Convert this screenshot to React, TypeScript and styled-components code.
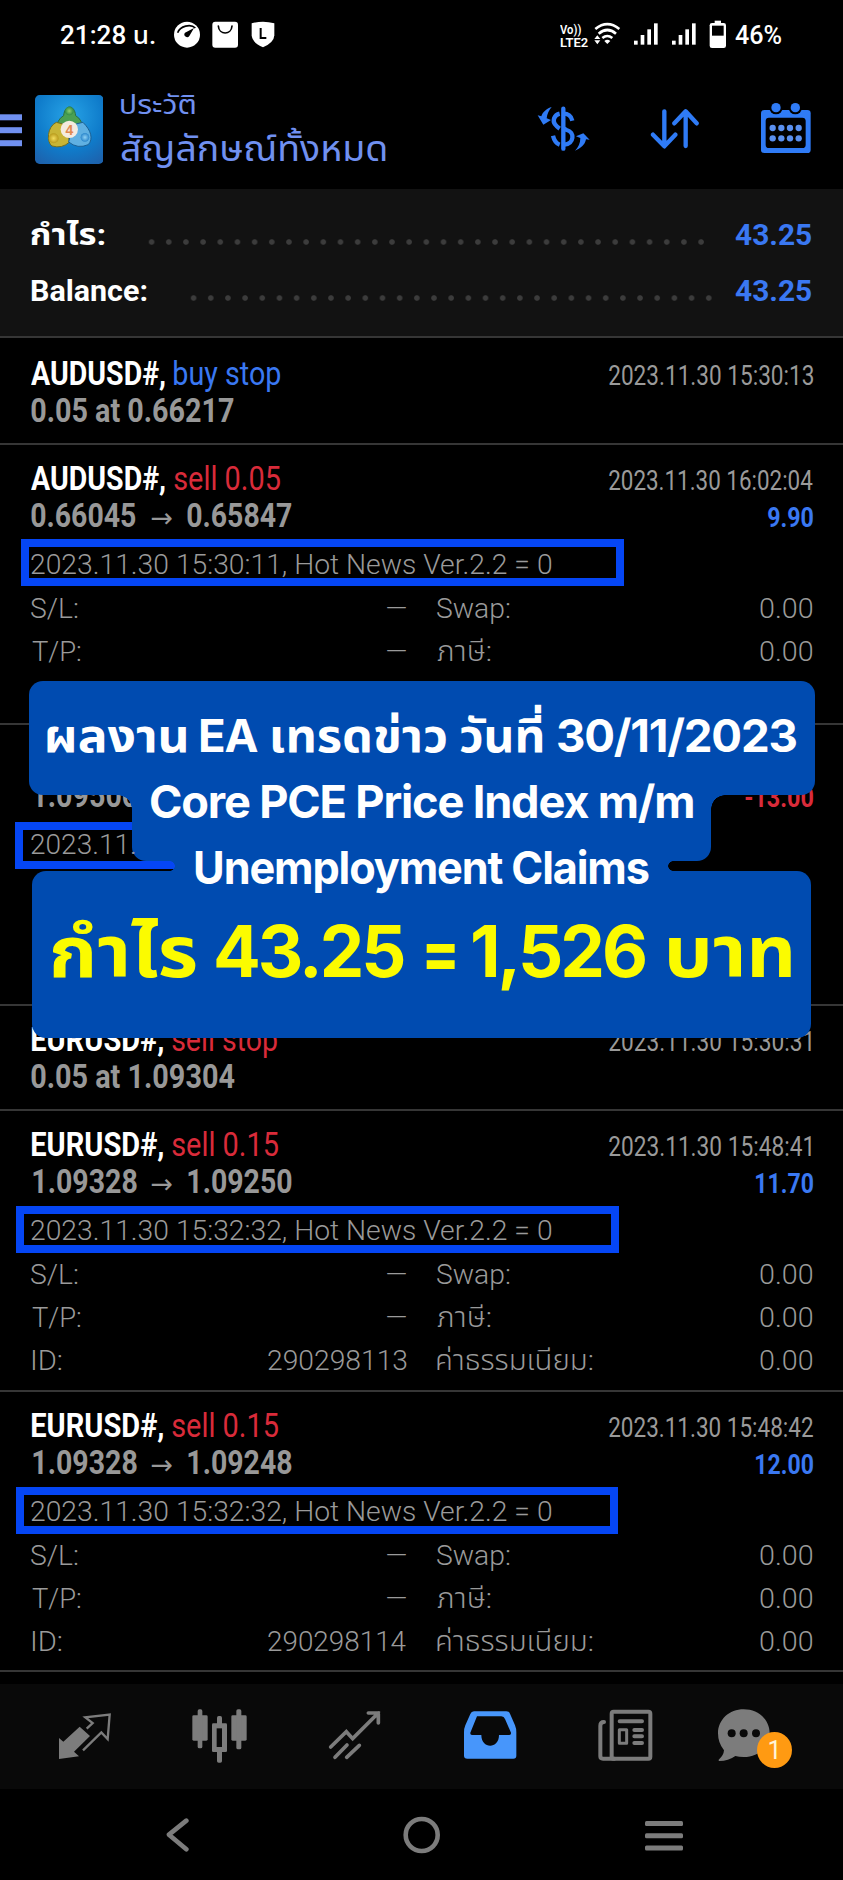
import React, { useLayoutEffect, useRef, useState } from 'react';
import styled, { createGlobalStyle } from 'styled-components';

const ROBOTO = 'Roboto, "Noto Sans Thai", "Noto Sans", sans-serif';
const INTER = 'Inter, "Noto Sans Thai", "Noto Sans", sans-serif';

const C = {
  blue: '#3a78f2',
  icon: '#2f7bf6',
  head: '#7090f0',
  red: '#d92b3a',
  grey: '#989898',
  dim: '#9a9a9a',
  line: '#363636',
  frame: '#0546f5',
  banner: '#004bb0',
  nav: '#7c7c7c',
};

const Global = createGlobalStyle`
  html, body { margin: 0; background: #000; }
  *, *::before, *::after { box-sizing: border-box; }
`;

/* ---------- text set to a given ink width ---------- */

const FitBox = styled.span<{ $w: number; $ml: number }>`
  display: block;
  flex: none;
  width: ${(p) => p.$w}px;
  margin-left: ${(p) => p.$ml}px;
  white-space: nowrap;
`;

const FitInk = styled.span<{ $size: number; $weight: number; $color: string; $family: string; $track: number }>`
  display: inline-block;
  transform-origin: 0 50%;
  font-family: ${(p) => p.$family};
  font-size: ${(p) => p.$size}px;
  font-weight: ${(p) => p.$weight};
  letter-spacing: ${(p) => p.$track}px;
  color: ${(p) => p.$color};
`;

type FitProps = {
  children: string;
  w: number;
  box?: number;
  size?: number;
  weight?: number;
  color?: string;
  family?: string;
  ml?: number;
  track?: number;
};

function Fit({
  children,
  w,
  box,
  size = 28,
  weight = 330,
  color = C.dim,
  family = ROBOTO,
  ml = 0,
  track = 0,
}: FitProps) {
  const ref = useRef<HTMLSpanElement>(null);
  const [t, setT] = useState('none');
  useLayoutEffect(() => {
    const ctx = document.createElement('canvas').getContext('2d');
    if (!ctx) return;
    ctx.font = `${weight} ${size}px ${family}`;
    ctx.letterSpacing = `${track}px`;
    const m = ctx.measureText(children);
    const ink = m.actualBoundingBoxRight + m.actualBoundingBoxLeft;
    if (ink <= 0) return;
    const s = w / ink;
    setT(`translateX(${(m.actualBoundingBoxLeft * s).toFixed(2)}px) scaleX(${s.toFixed(4)})`);
  }, [children, w, size, weight, family, track]);
  return (
    <FitBox $w={box ?? w} $ml={ml}>
      <FitInk
        ref={ref}
        $size={size}
        $weight={weight}
        $color={color}
        $family={family}
        $track={track}
        style={{ transform: t }}
      >
        {children}
      </FitInk>
    </FitBox>
  );
}

/* ---------- page ---------- */

const Screen = styled.main`
  position: relative;
  display: flex;
  flex-direction: column;
  width: 843px;
  height: 1880px;
  overflow: hidden;
  background: #000;
  font-family: ${ROBOTO};
`;

const Glyph = styled.svg<{ $ml?: number; $mt?: number }>`
  display: block;
  flex: none;
  margin-left: ${(p) => p.$ml ?? 0}px;
  margin-top: ${(p) => p.$mt ?? 0}px;
`;

const StatusBar = styled.header`
  display: flex;
  justify-content: space-between;
  height: 70px;
  padding: 0 61px 0 61px;
  line-height: 72px;
`;

const Cluster = styled.div`
  display: flex;
  align-items: flex-start;
`;

const Carrier = styled.div`
  display: flex;
  flex-direction: column;
  width: 29px;
  padding-top: 23px;
  line-height: 11.5px;
`;

function StatusIcons() {
  return (
    <Glyph $ml={19} $mt={20} width={102} height={30} viewBox="522 60 306 90">
      <circle cx="561" cy="104" r="39" fill="#fff" />
      <path d="M533 98C540 78 572 70 586 84" fill="none" stroke="#000" strokeWidth="5" />
      <path d="M582 84L568 108A8 8 0 1 1 555 98Z" fill="#000" />
      <rect x="637" y="65" width="77" height="78" rx="9" fill="#fff" />
      <path d="M655 78C657 106 694 106 696 78" fill="none" stroke="#000" strokeWidth="5" strokeLinecap="round" />
      <path d="M755 70Q789 60 823 70V106Q822 128 789 142Q756 128 755 106Z" fill="#fff" />
      <path d="M782 84V114H799" fill="none" stroke="#000" strokeWidth="6" />
    </Glyph>
  );
}

function SignalIcons() {
  return (
    <Glyph $ml={5} $mt={20} width={132} height={30} viewBox="518 60 396 90">
      <g fill="none" stroke="#fff" strokeWidth="8">
        <path d="M522 87Q558 58 594 87" />
        <path d="M532 101Q558 79 584 101" />
        <path d="M543 114Q558 102 573 114" />
      </g>
      <path d="M549 123Q558 116 567 123L558 132Z" fill="#fff" />
      <path d="M519 117L528 106L537 117ZM519 121L528 133L537 121Z" fill="#fff" />
      {[638, 752].map((x) => (
        <g key={x} fill="#fff">
          <rect x={x} y="122" width="11" height="12" />
          <rect x={x + 20} y="105" width="11" height="29" />
          <rect x={x + 40} y="88" width="11" height="46" />
          <rect x={x + 60} y="70" width="11" height="64" />
        </g>
      ))}
      <path d="M880 62H899V70H880Z" fill="#fff" />
      <rect x="865" y="69" width="49" height="75" rx="7" fill="#fff" />
      <rect x="872" y="77" width="35" height="30" fill="#000" />
    </Glyph>
  );
}

const AppBar = styled.div`
  display: flex;
  align-items: flex-start;
  height: 119px;
  padding-right: 32px;
`;

const Titles = styled.div`
  display: flex;
  flex-direction: column;
  flex: 1;
  padding: 12px 0 0 18px;
`;

const TitleLine = styled.div<{ $h: number }>`
  height: ${(p) => p.$h}px;
  line-height: ${(p) => p.$h}px;
`;

function MenuIcon() {
  return (
    <Glyph $mt={44} width={22} height={33} viewBox="0 0 22 33" fill={C.head}>
      <rect y="0.3" width="22" height="6" />
      <rect y="13.2" width="22" height="6" />
      <rect y="26.2" width="22" height="6" />
    </Glyph>
  );
}

function Logo() {
  return (
    <Glyph $ml={12.7} $mt={24.5} width={68.6} height={69} viewBox="104 283 206 207">
      <defs>
        <radialGradient id="lg-bg" cx="50%" cy="30%" r="80%">
          <stop offset="0" stopColor="#27a3e6" />
          <stop offset="0.6" stopColor="#0f7ccb" />
          <stop offset="1" stopColor="#1d62ad" />
        </radialGradient>
        <radialGradient id="lg-green">
          <stop offset="0" stopColor="#8fd070" />
          <stop offset="1" stopColor="#2f8a45" />
        </radialGradient>
        <radialGradient id="lg-yellow">
          <stop offset="0" stopColor="#f3dc5c" />
          <stop offset="1" stopColor="#b99b1c" />
        </radialGradient>
        <radialGradient id="lg-blue">
          <stop offset="0" stopColor="#8fd2f6" />
          <stop offset="1" stopColor="#2a86cb" />
        </radialGradient>
      </defs>
      <rect x="104" y="283" width="206" height="207" rx="14" fill="url(#lg-bg)" />
      <path d="M190 345C193 310 223 310 226 345Q248 357 246 388L208 400L170 388Q168 357 190 345Z" fill="#4ba052" stroke="#2b6d3e" strokeWidth="3" />
      <path d="M168 365C140 378 138 425 155 436Q185 445 208 424L196 372Z" fill="#c8b536" stroke="#6f6d22" strokeWidth="3" />
      <path d="M248 365C272 388 280 415 264 432Q232 446 205 424L218 372Z" fill="#5fb0e2" stroke="#1a5f94" strokeWidth="3" />
      <circle cx="207" cy="331" r="13" fill="url(#lg-green)" />
      <circle cx="160" cy="413" r="15" fill="url(#lg-yellow)" />
      <circle cx="254" cy="410" r="13" fill="url(#lg-blue)" />
      <circle cx="207" cy="386" r="26" fill="#f4ebdf" />
      <text x="207" y="402" textAnchor="middle" fontFamily="Liberation Sans, sans-serif" fontSize="42" fontWeight="700" fill="#e08a50">
        4
      </text>
    </Glyph>
  );
}

function DollarIcon() {
  return (
    <Glyph $mt={35} width={54} height={48} viewBox="348 315 162 144">
      <g fill="none" stroke={C.icon}>
        <path d="M427 326V446" strokeWidth="13" strokeLinecap="round" />
        <path d="M454 362C450 345 440 341 427 341M416 341C399 345 394 362 402 373Q407 380 416 386" strokeWidth="13" />
        <path d="M396 407C400 424 408 431 416 434M430 434C460 432 462 396 437 390L427 384" strokeWidth="13" />
      </g>
      <path d="M392 321C379 325 365 335 361 349L350 346L367 374L390 360L377 355C378 342 384 331 392 321Z" fill={C.icon} />
      <path d="M462 452C478 446 492 435 495 418L506 419L487 400L465 409L478 414C478 430 472 442 462 452Z" fill={C.icon} />
    </Glyph>
  );
}

function SortIcon() {
  return (
    <Glyph $ml={59.3} $mt={37} width={50} height={44} viewBox="688 321 150 132">
      <path
        d="M731 334V438M697 404L731 439L764 404M795 438V334M761 370L795 334L828 370"
        fill="none"
        stroke={C.icon}
        strokeWidth="13"
        strokeLinecap="round"
        strokeLinejoin="round"
      />
    </Glyph>
  );
}

function CalendarIcon() {
  return (
    <Glyph $ml={60.7} $mt={32} width={50} height={52} viewBox="1020 306 150 156">
      <rect x="1020" y="330" width="149" height="129" rx="10" fill={C.icon} />
      <rect x="1034" y="353" width="120" height="91" rx="10" fill="#000" />
      {[1065, 1123].map((x) => (
        <g key={x}>
          <circle cx={x} cy="323" r="20" fill="#000" />
          <circle cx={x} cy="323" r="14" fill={C.icon} />
        </g>
      ))}
      {[384, 415].map((y) =>
        [1055, 1081, 1107, 1133].map((x) => <circle key={`${x}-${y}`} cx={x} cy={y} r="9.5" fill="#5a90f0" />),
      )}
    </Glyph>
  );
}

/* ---------- summary ---------- */

const Summary = styled.section`
  display: flex;
  flex-direction: column;
  height: 149px;
  padding: 18px 32px 0 31px;
  background: #121212;
  border-bottom: 2px solid ${C.line};
`;

const SummaryRow = styled.div`
  display: flex;
  justify-content: space-between;
  align-items: baseline;
  height: 56px;
  line-height: 56px;
`;

const Dots = styled.span<{ $count: number; $end: number }>`
  flex: none;
  align-self: flex-start;
  width: ${(p) => p.$count * 17.18}px;
  height: 6px;
  margin: 32px ${(p) => p.$end}px 0 auto;
  background: radial-gradient(circle at center, #3c3c3c 2.3px, transparent 3.2px) 0 0 / 17.18px 6px repeat-x;
`;

/* ---------- history ---------- */

const Entry = styled.article<{ $h: number; $top?: number }>`
  position: relative;
  flex: none;
  height: ${(p) => p.$h}px;
  padding: ${(p) => p.$top ?? 15}px 30.5px 0 31px;
  border-bottom: 2px solid ${C.line};
`;

const Line = styled.div`
  display: flex;
  align-items: baseline;
  height: 37px;
  line-height: 37px;
`;

const Spacer = styled.span`
  flex: 1;
`;

const Comment = styled.div`
  position: relative;
  z-index: 1;
  height: 44px;
  margin-top: 9px;
  line-height: 44px;
`;

const Frame = styled.div<{ $x: number; $y: number; $w: number }>`
  position: absolute;
  left: ${(p) => p.$x}px;
  top: ${(p) => p.$y}px;
  width: ${(p) => p.$w}px;
  height: 47px;
  border: 8.5px solid ${C.frame};
`;

const Details = styled.div`
  display: grid;
  grid-template-columns: 375px 31px 375px;
  grid-auto-rows: 43px;
  line-height: 43px;
`;

const Cell = styled.div<{ $col: number }>`
  display: flex;
  justify-content: space-between;
  align-items: baseline;
  grid-column: ${(p) => p.$col};
`;

type Trade = {
  h: number;
  top?: number;
  symbol?: string;
  symbolW?: number;
  side?: string;
  sideW?: number;
  buy?: boolean;
  time?: string;
  timeW?: number;
  price: string;
  priceW: number;
  close?: string;
  closeW?: number;
  profit?: string;
  profitW?: number;
  comment?: string;
  commentW?: number;
  details?: boolean;
  id?: string;
  frame?: [number, number, number];
};

const TRADES: Trade[] = [
  { h: 107, top: 17, symbol: 'AUDUSD#,', symbolW: 134, side: 'buy stop', sideW: 106.5, buy: true, time: '2023.11.30 15:30:13', timeW: 204, price: '0.05 at 0.66217', priceW: 203 },
  {
    h: 280, symbol: 'AUDUSD#,', symbolW: 134, side: 'sell 0.05', sideW: 106, time: '2023.11.30 16:02:04', timeW: 204,
    price: '0.66045', priceW: 105, close: '0.65847', closeW: 105, profit: '9.90', profitW: 45,
    comment: '2023.11.30 15:30:11, Hot News Ver.2.2 = 0', commentW: 520, details: true, frame: [21, 93.5, 603],
  },
  {
    h: 281, price: '1.09500', priceW: 104, profit: '-13.00', profitW: 68,
    comment: '2023.11.', commentW: 104, frame: [15, 97, 603],
  },
  { h: 105, symbol: 'EURUSD#,', symbolW: 131.3, side: 'sell stop', sideW: 105, time: '2023.11.30 15:30:31', timeW: 201.5, price: '0.05 at 1.09304', priceW: 203.5 },
  {
    h: 281, symbol: 'EURUSD#,', symbolW: 131.3, side: 'sell 0.15', sideW: 106, time: '2023.11.30 15:48:41', timeW: 201.5,
    price: '1.09328', priceW: 103.5, close: '1.09250', closeW: 103.3, profit: '11.70', profitW: 57,
    comment: '2023.11.30 15:32:32, Hot News Ver.2.2 = 0', commentW: 520, details: true, id: '290298113', frame: [16, 94.5, 603],
  },
  {
    h: 280, symbol: 'EURUSD#,', symbolW: 131.3, side: 'sell 0.15', sideW: 106, time: '2023.11.30 15:48:42', timeW: 204,
    price: '1.09328', priceW: 103.5, close: '1.09248', closeW: 103.3, profit: '12.00', profitW: 57,
    comment: '2023.11.30 15:32:32, Hot News Ver.2.2 = 0', commentW: 520, details: true, id: '290298114', frame: [16, 95, 602],
  },
];

function Row({ t }: { t: Trade }) {
  const eur = t.symbol?.startsWith('E');
  const narrowStart = t.price.startsWith('1') ? 1.6 : 0.2;
  return (
    <Entry $h={t.h} $top={t.top}>
      {t.frame && <Frame $x={t.frame[0]} $y={t.frame[1]} $w={t.frame[2]} />}
      <Line>
        {t.symbol && <Fit w={t.symbolW!} ml={eur ? 0.7 : 0} size={34} weight={700} color="#fff">{t.symbol}</Fit>}
        {t.side && <Fit w={t.sideW!} ml={eur ? 8.6 : 9.3} size={34} weight={400} color={t.buy ? C.blue : C.red}>{t.side}</Fit>}
        <Spacer />
        {t.time && <Fit w={t.timeW!} box={204} weight={400}>{t.time}</Fit>}
      </Line>
      <Line>
        <Fit w={t.priceW} ml={narrowStart} size={34} weight={700} color={C.grey}>{t.price}</Fit>
        {t.close && (
          <>
            <Fit w={21} ml={15.4} size={27} weight={400} color={C.grey} family={'"DejaVu Sans", sans-serif'}>→</Fit>
            <Fit w={t.closeW!} ml={eur ? 15.8 : 14.2} size={34} weight={700} color={C.grey}>{t.close}</Fit>
          </>
        )}
        <Spacer />
        {t.profit && (
          <Fit w={t.profitW!} weight={700} color={t.profit.startsWith('-') ? C.red : C.blue}>{t.profit}</Fit>
        )}
      </Line>
      {t.comment && (
        <Comment>
          <Fit w={t.commentW!} ml={0.4}>{t.comment}</Fit>
        </Comment>
      )}
      {t.details && (
        <Details>
          <Cell $col={1}><Fit w={47} ml={0.4}>S/L:</Fit><Fit w={19}>–</Fit></Cell>
          <Cell $col={3}><Fit w={73}>Swap:</Fit><Fit w={52}>0.00</Fit></Cell>
          <Cell $col={1}><Fit w={49} ml={0.8}>T/P:</Fit><Fit w={19}>–</Fit></Cell>
          <Cell $col={3}><Fit w={54}>ภาษี:</Fit><Fit w={52}>0.00</Fit></Cell>
          {t.id && (
            <>
              <Cell $col={1}><Fit w={30} ml={1}>ID:</Fit><Fit w={138.5}>{t.id}</Fit></Cell>
              <Cell $col={3}><Fit w={156}>ค่าธรรมเนียม:</Fit><Fit w={52}>0.00</Fit></Cell>
            </>
          )}
        </Details>
      )}
    </Entry>
  );
}

/* ---------- banner over the list ---------- */

const Banner = styled.div`
  position: absolute;
  left: 0;
  top: 681px;
  width: 843px;
  display: flex;
  flex-direction: column;
  align-items: center;
`;

const Slab = styled.div<{ $w: number; $h: number; $r?: string }>`
  width: ${(p) => p.$w}px;
  height: ${(p) => p.$h}px;
  border-radius: ${(p) => p.$r ?? '0'};
  background: ${C.banner};
`;

const Fillet = styled(Slab)<{ $f: number; $fh: number; $at: string }>`
  position: relative;
  &::before,
  &::after {
    content: '';
    position: absolute;
    top: 0;
    width: ${(p) => p.$f}px;
    height: ${(p) => p.$fh}px;
  }
  &::before {
    right: 100%;
    background: radial-gradient(circle at 0 ${(p) => p.$at}, transparent ${(p) => p.$f - 0.5}px, ${C.banner} ${(p) => p.$f}px);
  }
  &::after {
    left: 100%;
    background: radial-gradient(circle at 100% ${(p) => p.$at}, transparent ${(p) => p.$f - 0.5}px, ${C.banner} ${(p) => p.$f}px);
  }
`;

const BannerText = styled.div`
  position: absolute;
  left: 0;
  top: 703px;
  width: 843px;
`;

const BannerLine = styled.div<{ $x: number; $h: number }>`
  display: flex;
  align-items: baseline;
  height: ${(p) => p.$h}px;
  line-height: ${(p) => p.$h}px;
  padding-left: ${(p) => p.$x}px;
`;

type WordProps = { children: string; w: number; ml?: number; track?: number };
const White = (p: WordProps) => <Fit track={-1.2} {...p} size={45.5} weight={700} color="#fff" family={INTER} />;
const Yellow = (p: WordProps) => <Fit track={-3} {...p} size={71} weight={750} color="#fbfb00" family={INTER} />;

/* ---------- bottom bars ---------- */

const TabBar = styled.nav`
  display: flex;
  align-items: flex-start;
  height: 105px;
  margin-top: 12px;
  padding: 23px 0 0 57px;
  background: #090909;
`;

const ChatTab = styled.div`
  position: relative;
  margin-left: 63px;
`;

const Badge = styled.span`
  position: absolute;
  left: 40px;
  top: 25px;
  display: flex;
  align-items: center;
  justify-content: center;
  width: 35px;
  height: 36px;
  border-radius: 50%;
  background: #ff9a12;
  color: #fff4d8;
  font-size: 25px;
  font-weight: 400;
`;

const SystemBar = styled.nav`
  display: flex;
  align-items: center;
  height: 91px;
  padding-left: 166px;
`;

function TabIcons() {
  return (
    <>
      <Glyph width={56} height={56} viewBox="171 142 168 168">
        <path d="M177 235L190 246L239 201L270 229L222 276L237 290L177 298Z" fill={C.nav} />
        <path d="M260 207L278 190L256 173L329 165L323 238L304 218L249 272" fill="none" stroke={C.nav} strokeWidth="7" />
      </Glyph>
      <Glyph $ml={77} width={59} height={56} viewBox="570 142 177 168">
        <g fill={C.nav}>
          <rect x="577" y="167" width="46" height="76" rx="4" />
          <rect x="593" y="149" width="14" height="117" rx="5" />
          <rect x="694" y="167" width="46" height="76" rx="4" />
          <rect x="709" y="149" width="15" height="120" rx="5" />
          <rect x="636" y="191" width="45" height="86" rx="4" />
          <rect x="651" y="169" width="15" height="140" rx="5" />
        </g>
        <rect x="650" y="206" width="16" height="56" fill="#090909" />
      </Glyph>
      <Glyph $ml={78} width={57} height={56} viewBox="981 142 171 168">
        <path
          d="M992 262L1039 216L1058 237L1135 160M1105 160H1135V190M1005 293L1041 256M1040 293L1078 257"
          fill="none"
          stroke={C.nav}
          strokeWidth="11"
          strokeLinecap="round"
        />
      </Glyph>
      <Glyph $ml={77.7} width={58} height={56} viewBox="122 142 174 168">
        <path
          fillRule="evenodd"
          d="M158 155H255Q263 155 266 162L281 197Q285 206 285 218V288Q285 297 276 297H138Q128 297 128 288V218Q128 206 132 197L147 163Q150 155 158 155ZM167 170L147 219Q146 226 152 226H180C180 269 233 269 233 226H264Q270 226 269 219L251 178Q248 170 240 170Z"
          fill="#4796fb"
        />
      </Glyph>
      <Glyph $ml={76.3} width={58} height={56} viewBox="525 142 174 168">
        <g fill="none" stroke={C.nav} strokeWidth="12" strokeLinecap="round" strokeLinejoin="round">
          <rect x="572" y="156" width="116" height="141" rx="6" />
          <path d="M549 187Q538 187 538 198V290Q538 297 546 297H580" />
          <path d="M596 185H663M640 211H663M640 230H663M640 250H663" />
          <rect x="595" y="210" width="22" height="41" strokeWidth="9" />
        </g>
      </Glyph>
    </>
  );
}

export default function App() {
  return (
    <Screen>
      <Global />
      <StatusBar>
        <Cluster>
          <Fit w={94.3} size={25} weight={500} color="#fff">21:28 น.</Fit>
          <StatusIcons />
        </Cluster>
        <Cluster>
          <Carrier>
            <Fit w={21} size={12.5} weight={600} color="#fff">Vo))</Fit>
            <Fit w={28} size={12.5} weight={600} color="#fff">LTE2</Fit>
          </Carrier>
          <SignalIcons />
          <Fit w={46.7} ml={9} size={25} weight={500} color="#fff">46%</Fit>
        </Cluster>
      </StatusBar>

      <AppBar>
        <MenuIcon />
        <Logo />
        <Titles>
          <TitleLine $h={47}>
            <Fit w={73.5} size={27} weight={400} color={C.head}>ประวัติ</Fit>
          </TitleLine>
          <TitleLine $h={41}>
            <Fit w={264.5} size={35} weight={400} color={C.head}>สัญลักษณ์ทั้งหมด</Fit>
          </TitleLine>
        </Titles>
        <DollarIcon />
        <SortIcon />
        <CalendarIcon />
      </AppBar>

      <Summary>
        <SummaryRow>
          <Fit w={73.5} size={30} weight={700} color="#fff">กำไร:</Fit>
          <Dots $count={33} $end={25} />
          <Fit w={76} size={30} weight={700} color={C.blue}>43.25</Fit>
        </SummaryRow>
        <SummaryRow>
          <Fit w={115.5} size={30} weight={700} color="#fff">Balance:</Fit>
          <Dots $count={31} $end={17} />
          <Fit w={76} size={30} weight={700} color={C.blue}>43.25</Fit>
        </SummaryRow>
      </Summary>

      {TRADES.map((t, i) => (
        <Row key={i} t={t} />
      ))}

      <TabBar>
        <TabIcons />
        <ChatTab>
          <Glyph width={58} height={56} viewBox="888 142 174 168">
            <path
              d="M968 149C1012 149 1046 180 1046 221C1046 262 1012 292 968 292Q954 292 943 289Q922 304 895 304Q892 303 893 300Q908 288 909 272Q891 250 891 221C891 180 925 149 968 149Z"
              fill={C.nav}
            />
            {[932, 968, 1005].map((x) => (
              <circle key={x} cx={x} cy="221" r="12" fill="#090909" />
            ))}
          </Glyph>
          <Badge>1</Badge>
        </ChatTab>
      </TabBar>

      <SystemBar>
        <Glyph width={24} height={36} viewBox="498 471 72 108">
          <path d="M559 482L507 524L559 568" fill="none" stroke={C.nav} strokeWidth="14" strokeLinecap="round" strokeLinejoin="round" />
        </Glyph>
        <Glyph $ml={213} width={38} height={38} viewBox="0 0 38 38">
          <circle cx="18.7" cy="19" r="16" fill="none" stroke={C.nav} strokeWidth="4.6" />
        </Glyph>
        <Glyph $ml={204} $mt={2} width={38} height={30} viewBox="0 0 38 30" fill={C.nav}>
          <rect y="0" width="38" height="5" rx="1.5" />
          <rect y="12.2" width="38" height="5" rx="1.5" />
          <rect y="24.5" width="38" height="5" rx="1.5" />
        </Glyph>
      </SystemBar>

      <Banner>
        <Slab $w={786} $h={114} $r="14px" />
        <Fillet $w={579} $h={66} $r="0 0 14px 14px" $f={14} $fh={14} $at="100%" />
        <Fillet $w={493} $h={10} $f={5} $fh={10} $at="50%" />
        <Slab $w={779} $h={167} $r="14px" />
      </Banner>
      <BannerText>
        <BannerLine $x={47} $h={66}>
          <White w={139} track={0}>ผลงาน</White>
          <White w={57.5} ml={14}>EA</White>
          <White w={174.5} ml={14} track={0}>เทรดข่าว</White>
          <White w={83} ml={14} track={0}>วันที่</White>
          <White w={238.5} ml={14.5}>30/11/2023</White>
        </BannerLine>
        <BannerLine $x={150.5} $h={66}>
          <White w={542}>Core PCE Price Index m/m</White>
        </BannerLine>
        <BannerLine $x={195} $h={66}>
          <White w={453.5}>Unemployment Claims</White>
        </BannerLine>
        <BannerLine $x={52} $h={100}>
          <Yellow w={144} track={0}>กำไร</Yellow>
          <Yellow w={188} ml={20}>43.25</Yellow>
          <Yellow w={29} ml={22}>=</Yellow>
          <Yellow w={172} ml={18}>1,526</Yellow>
          <Yellow w={123} ml={23} track={0}>บาท</Yellow>
        </BannerLine>
      </BannerText>
    </Screen>
  );
}
